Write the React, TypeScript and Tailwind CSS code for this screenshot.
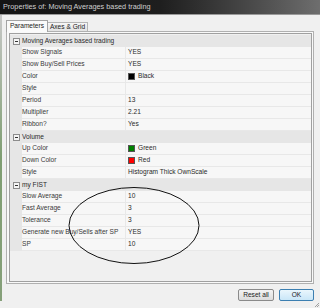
import React from 'react';

type Row = { name: string; value: string; swatch?: string };
type Group = { title: string; rows: Row[] };

const groups: Group[] = [
  {
    title: 'Moving Averages based trading',
    rows: [
      { name: 'Show Signals', value: 'YES' },
      { name: 'Show Buy/Sell Prices', value: 'YES' },
      { name: 'Color', value: 'Black', swatch: '#000000' },
      { name: 'Style', value: '' },
      { name: 'Period', value: '13' },
      { name: 'Multiplier', value: '2.21' },
      { name: 'Ribbon?', value: 'Yes' },
    ],
  },
  {
    title: 'Volume',
    rows: [
      { name: 'Up Color', value: 'Green', swatch: '#008000' },
      { name: 'Down Color', value: 'Red', swatch: '#ff0000' },
      { name: 'Style', value: 'Histogram Thick OwnScale' },
    ],
  },
  {
    title: 'my FIST',
    rows: [
      { name: 'Slow Average', value: '10' },
      { name: 'Fast Average', value: '3' },
      { name: 'Tolerance', value: '3' },
      { name: 'Generate new Buy/Sells after SP', value: 'YES' },
      { name: 'SP', value: '10' },
    ],
  },
];

function GroupHeader({ title }: { title: string }) {
  return (
    <div className="flex h-[12px] items-center bg-[#e6e6e6]">
      <div className="flex w-[12px] items-center justify-center">
        <div className="flex h-[7px] w-[7px] items-center justify-center border border-[#8c8c8c] bg-[#f4f4f4]">
          <div className="h-px w-[3px] bg-[#333]" />
        </div>
      </div>
      <span className="text-[#2a2a2a]">{title}</span>
    </div>
  );
}

function PropRow({ row }: { row: Row }) {
  return (
    <div className="flex h-[12px]">
      <div className="w-[12px] bg-[#e6e6e6]" />
      <div className="flex w-[104px] items-center border-b border-r border-[#e8e8e8] bg-[#f7f7f7] text-[#3a3a3a]">
        {row.name}
      </div>
      <div className="flex flex-1 items-center gap-[3px] border-b border-[#e8e8e8] bg-[#f7f7f7] pl-[2px] text-[#2a2a2a]">
        {row.swatch && (
          <span
            className="inline-block h-[7px] w-[7px] border border-[#555]"
            style={{ backgroundColor: row.swatch }}
          />
        )}
        {row.value}
      </div>
    </div>
  );
}

export default function App() {
  return (
    <div
      className="relative h-[308px] w-[320px] overflow-hidden bg-[#f0f0f0] text-[6.6px] leading-none"
      style={{ fontFamily: '"Liberation Sans", Arial, sans-serif' }}
    >
      {/* title bar */}
      <div className="flex h-[15px] items-center border-b border-[#9a9a9a] bg-gradient-to-r from-[#141414] via-[#1e1e1e] to-[#6e6e6e] pl-[3px] text-[7.3px] text-[#cfcfcf]">
        Properties of: Moving Averages based trading
      </div>

      <div className="flex">
        <div className="w-[2px] self-stretch bg-gradient-to-b from-[#c8c8c8] via-[#7f9e72] to-[#86a07a]" />
        <div className="flex flex-1 flex-col pl-[4px] pr-[6px] pt-[4px]">
          {/* tabs */}
          <div className="flex h-[12px] items-end">
            <div className="relative z-10 -mb-px flex h-[12px] w-[42px] items-center justify-center border border-b-0 border-[#a3a3a3] bg-[#fafafa] text-[#222]">
              Parameters
            </div>
            <div className="flex h-[9px] w-[40px] items-center justify-center border border-b-0 border-l-0 border-[#b5b5b5] bg-gradient-to-b from-[#f6f6f6] to-[#e3e3e3] text-[#222]">
              Axes &amp; Grid
            </div>
          </div>

          {/* tab panel */}
          <div className="flex h-[253px] flex-col border border-[#b0b0b0] bg-[#f9f9f9] pb-px pl-[2px] pr-px pt-px">
            <div className="flex flex-1 flex-col border border-[#a0a0a0] bg-[#f0f0f0] pt-px">
              {groups.map((g) => (
                <React.Fragment key={g.title}>
                  <GroupHeader title={g.title} />
                  {g.rows.map((r, i) => (
                    <PropRow key={g.title + i} row={r} />
                  ))}
                </React.Fragment>
              ))}
            </div>
          </div>

          {/* buttons */}
          <div className="flex justify-end gap-[5px] pt-[5px]">
            <button className="flex h-[12px] w-[36px] items-center justify-center rounded-[2px] border border-[#8a8a8a] bg-gradient-to-b from-[#f4f4f4] to-[#dcdcdc] text-[#222]">
              Reset all
            </button>
            <button className="flex h-[12px] w-[35px] items-center justify-center rounded-[2px] border border-[#3c7fb1] bg-gradient-to-b from-[#eaf6fd] to-[#c9e6f8] text-[#222]">
              OK
            </button>
          </div>
        </div>
      </div>

      {/* resize grip */}
      <svg className="absolute bottom-0 right-0" width="6" height="6" viewBox="0 0 6 6">
        <path d="M5 1L1 5M5 3L3 5" stroke="#a0a0a0" strokeWidth="1" />
      </svg>

      {/* hand-drawn circle */}
      <svg className="pointer-events-none absolute left-0 top-0" width="320" height="308">
        <ellipse cx="134" cy="225.5" rx="65" ry="38" fill="none" stroke="#111" strokeWidth="1" />
      </svg>
    </div>
  );
}
